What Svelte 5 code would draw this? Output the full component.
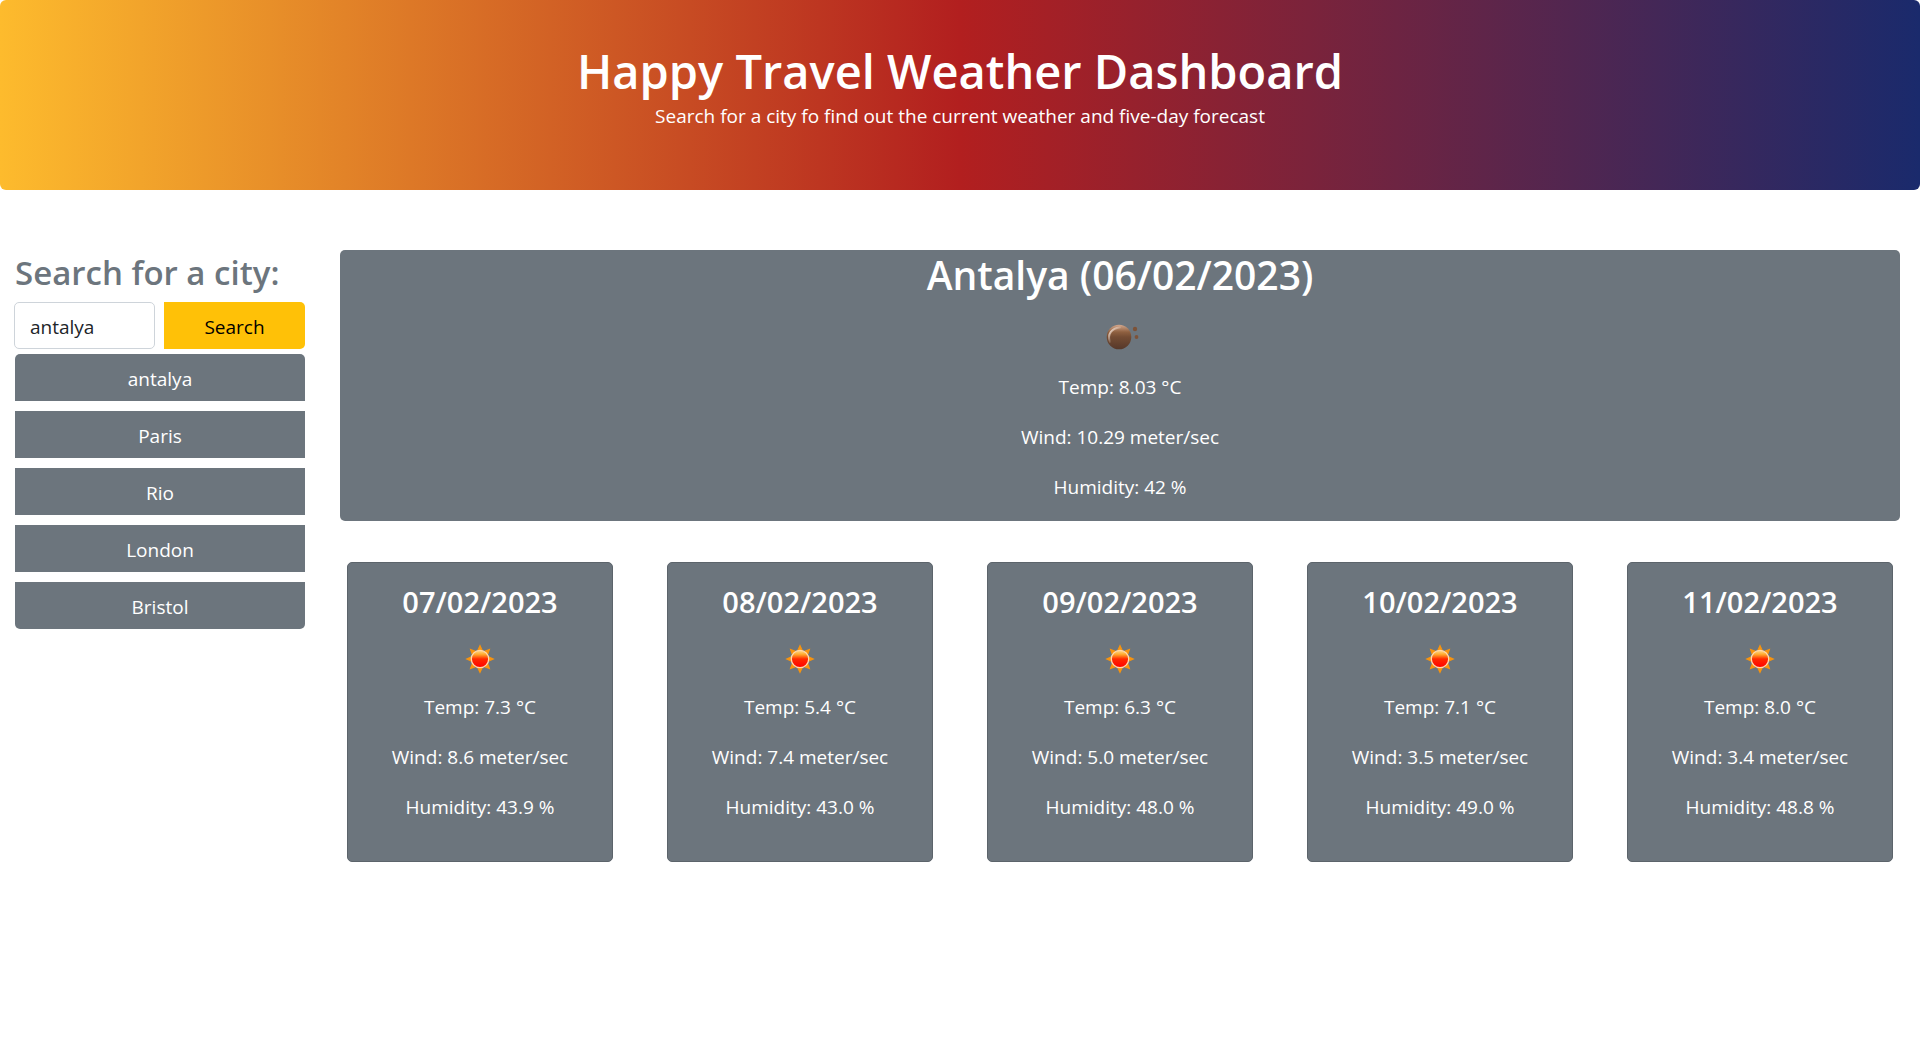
<script>
  let query = $state('antalya');

  const history = ['antalya', 'Paris', 'Rio', 'London', 'Bristol'];

  const current = { city: 'Antalya', date: '06/02/2023', temp: '8.03', wind: '10.29', humidity: '42' };

  const forecast = [
    { date: '07/02/2023', temp: '7.3', wind: '8.6', humidity: '43.9' },
    { date: '08/02/2023', temp: '5.4', wind: '7.4', humidity: '43.0' },
    { date: '09/02/2023', temp: '6.3', wind: '5.0', humidity: '48.0' },
    { date: '10/02/2023', temp: '7.1', wind: '3.5', humidity: '49.0' },
    { date: '11/02/2023', temp: '8.0', wind: '3.4', humidity: '48.8' },
  ];
</script>

{#snippet readings(day)}
  <p>Temp: {day.temp} °C</p>
  <p>Wind: {day.wind} meter/sec</p>
  <p>Humidity: {day.humidity} %</p>
{/snippet}

<header class="hero">
  <h1>Happy Travel Weather Dashboard</h1>
  <p>Search for a city fo find out the current weather and five-day forecast</p>
</header>

<div class="layout">
  <aside class="sidebar">
    <form onsubmit={(e) => e.preventDefault()}>
      <h2><label for="city">Search for a city:</label></h2>
      <div class="search-row">
        <input id="city" type="text" bind:value={query} />
        <button type="submit" class="search">Search</button>
      </div>
    </form>
    <div class="history">
      {#each history as city}
        <button type="button" onclick={() => (query = city)}>{city}</button>
      {/each}
    </div>
  </aside>

  <main>
    <section class="today">
      <h2>{current.city} ({current.date})</h2>
      <div class="icon">
        <svg width="40" height="30" viewBox="0 0 40 30" aria-hidden="true">
          <defs>
            <linearGradient id="ball" x1="0" y1="0" x2="0" y2="1">
              <stop offset="0" stop-color="#d3a88e" />
              <stop offset="0.3" stop-color="#8f6040" />
              <stop offset="0.5" stop-color="#744c33" />
              <stop offset="1" stop-color="#56382a" />
            </linearGradient>
            <linearGradient id="shine" x1="0" y1="0" x2="0.8" y2="0.8">
              <stop offset="0.1" stop-color="#f3e0d4" />
              <stop offset="0.8" stop-color="#f3e0d4" stop-opacity="0" />
            </linearGradient>
          </defs>
          <circle cx="19" cy="13" r="12.300" fill="url(#ball)" />
          <path d="M10 18C7 10 12 4 20 3.500" fill="none" stroke="url(#shine)" stroke-width="2" stroke-linecap="round" />
          <circle cx="35" cy="5" r="2.200" fill="#7d5238" />
          <circle cx="36.500" cy="13" r="1.900" fill="#7d5238" />
        </svg>
      </div>
      {@render readings(current)}
    </section>

    <section class="forecast">
      {#each forecast as day, i}
        <article class="card">
          <h3>{day.date}</h3>
          <div class="icon">
            <svg width="30" height="30" viewBox="0 0 30 30" aria-hidden="true">
              <defs>
                <linearGradient id="sun{i}" x1="0" y1="0" x2="0" y2="1">
                  <stop offset="0" stop-color="#ffe08f" />
                  <stop offset="0.25" stop-color="#ffa52a" />
                  <stop offset="0.5" stop-color="#ff2a00" />
                  <stop offset="1" stop-color="#ff0000" />
                </linearGradient>
              </defs>
              {#each [0, 45, 90, 135, 180, 225, 270, 315] as angle}
                <path d="M15 0.300L18.600 8H11.400Z" fill="#f7940f" transform="rotate({angle} 15 15)" />
              {/each}
              <circle cx="15" cy="15" r="8.700" fill="url(#sun{i})" stroke="#ffd9b0" stroke-width="1.300" />
            </svg>
          </div>
          {@render readings(day)}
        </article>
      {/each}
    </section>
  </main>
</div>

<style>
  :global(body) {
    background: #fff;
    color: #212529;
    font-family: 'Open Sans', 'Noto Sans', sans-serif;
    font-size: 19px;
    line-height: 30px;
  }

  h1,
  h2,
  h3,
  p {
    margin: 0;
  }

  h1,
  h2,
  h3 {
    font-weight: 600;
  }

  .hero {
    padding: 41px 20px 59px;
    border-radius: 6px;
    background: linear-gradient(90deg, #fdbb2d 0%, #b21f1f 50%, #1a2a6c 100%);
    color: #fff;
    text-align: center;
  }

  .hero h1 {
    font-size: 47px;
    line-height: 60px;
  }

  .layout {
    display: grid;
    grid-template-columns: 1fr 5fr;
    margin-top: 60px;
  }

  .sidebar {
    padding: 0 15px;
  }

  .sidebar h2 {
    margin-bottom: 7px;
    color: #6c757d;
    font-size: 33px;
    line-height: 45px;
    white-space: nowrap;
  }

  .search-row {
    display: grid;
    grid-template-columns: 1fr 1fr;
    gap: 9px;
    margin-left: -1px;
  }

  input,
  button {
    box-sizing: border-box;
    min-width: 0;
    height: 47px;
    font: inherit;
  }

  input {
    padding: 2px 15px 0;
    border: 1px solid #ced4da;
    border-radius: 5px;
    background: #fff;
    color: #212529;
  }

  button {
    padding: 2px 15px 0;
    border: 0;
    cursor: pointer;
  }

  .search {
    border-radius: 0 5px 5px 0;
    background: #ffc107;
    color: #000;
  }

  .history {
    display: flex;
    flex-direction: column;
    gap: 10px;
    margin-top: 5px;
  }

  .history button {
    border-radius: 0;
    background: #6c757d;
    color: #fff;
  }

  .history button:first-child {
    border-radius: 5px 5px 0 0;
  }

  .history button:last-child {
    border-radius: 0 0 5px 5px;
  }

  .today,
  .card {
    display: flow-root;
    border-radius: 5px;
    background: #6c757d;
    color: #fff;
    text-align: center;
  }

  .today {
    margin: 0 20px;
  }

  .today h2 {
    font-size: 39px;
    line-height: 50px;
  }

  .today p,
  .card p {
    margin-bottom: 20px;
  }

  .today p:last-child,
  .card p:last-child {
    margin-bottom: 19px;
  }

  .icon {
    display: flex;
    align-items: center;
    justify-content: center;
    height: 48px;
    margin: 15px 0 9px;
  }

  .forecast {
    display: grid;
    grid-template-columns: repeat(5, 1fr);
    gap: 54px;
    margin-top: 41px;
    padding: 0 27px;
  }

  .card {
    padding: 20px 0;
    border: 1px solid #5c646b;
  }

  .card h3 {
    font-size: 29px;
    line-height: 37px;
  }
</style>
